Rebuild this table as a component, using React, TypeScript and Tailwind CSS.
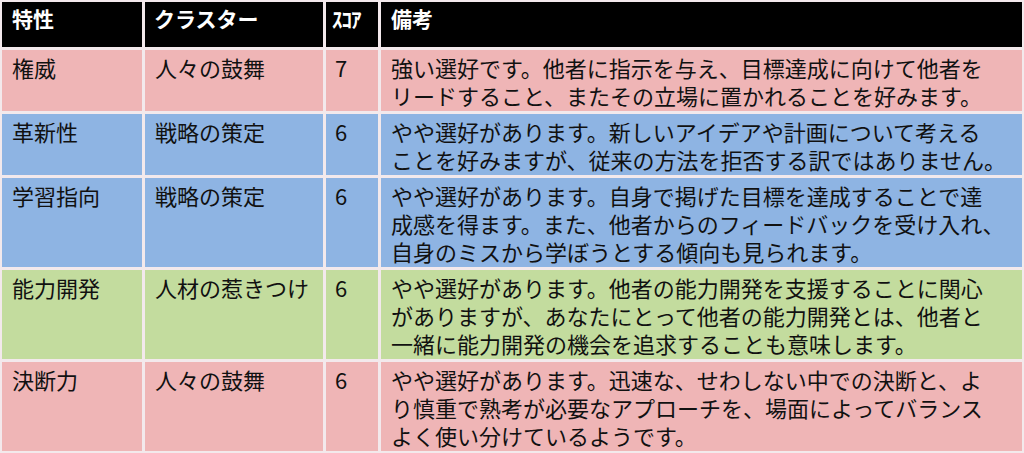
const rows = [
  {
    trait: "権威",
    cluster: "人々の鼓舞",
    score: "7",
    bg: "bg-[#efb5b6]",
    note: [
      "強い選好です。他者に指示を与え、目標達成に向けて他者を",
      "リードすること、またその立場に置かれることを好みます。",
    ],
  },
  {
    trait: "革新性",
    cluster: "戦略の策定",
    score: "6",
    bg: "bg-[#8eb4e3]",
    note: [
      "やや選好があります。新しいアイデアや計画について考える",
      "ことを好みますが、従来の方法を拒否する訳ではありません。",
    ],
  },
  {
    trait: "学習指向",
    cluster: "戦略の策定",
    score: "6",
    bg: "bg-[#8eb4e3]",
    note: [
      "やや選好があります。自身で掲げた目標を達成することで達",
      "成感を得ます。また、他者からのフィードバックを受け入れ、",
      "自身のミスから学ぼうとする傾向も見られます。",
    ],
  },
  {
    trait: "能力開発",
    cluster: "人材の惹きつけ",
    score: "6",
    bg: "bg-[#c3dc9e]",
    note: [
      "やや選好があります。他者の能力開発を支援することに関心",
      "がありますが、あなたにとって他者の能力開発とは、他者と",
      "一緒に能力開発の機会を追求することも意味します。",
    ],
  },
  {
    trait: "決断力",
    cluster: "人々の鼓舞",
    score: "6",
    bg: "bg-[#efb5b6]",
    note: [
      "やや選好があります。迅速な、せわしない中での決断と、よ",
      "り慎重で熟考が必要なアプローチを、場面によってバランス",
      "よく使い分けているようです。",
    ],
  },
];

const cell = "pt-[3px] pb-[2px] text-[22px] leading-[28px] text-[#111] whitespace-nowrap";

export default function App() {
  return (
    <div
      className="w-[1024px] h-[453px] bg-[#f3e9ec] p-[2px] overflow-hidden"
      style={{ fontFamily: '"Noto Sans CJK JP", "Noto Sans", sans-serif' }}
    >
      <div className="grid grid-cols-[140px_178px_52px_1fr] gap-[3px]">
        {/* header */}
        <div className="bg-black h-[45px] pl-[10px] pt-[2px] text-[21px] leading-[28px] font-bold text-white">特性</div>
        <div className="bg-black h-[45px] pl-[9px] pt-[2px] text-[21px] leading-[28px] font-bold text-white">クラスター</div>
        <div className="bg-black h-[45px] pl-[6px] pt-[2px] text-[21px] leading-[28px] font-bold text-white tracking-[-1px]">ｽｺｱ</div>
        <div className="bg-black h-[45px] pl-[10px] pt-[2px] text-[21px] leading-[28px] font-bold text-white">備考</div>

        {rows.map((r) => (
          <div key={r.trait} className="contents">
            <div className={`${r.bg} ${cell} pl-[10px]`}>{r.trait}</div>
            <div className={`${r.bg} ${cell} pl-[10px]`}>{r.cluster}</div>
            <div className={`${r.bg} ${cell} pl-[9px]`}>{r.score}</div>
            <div className={`${r.bg} ${cell} pl-[10px]`}>
              {r.note.map((line, i) => (
                <div key={i}>{line}</div>
              ))}
            </div>
          </div>
        ))}
      </div>
    </div>
  );
}
